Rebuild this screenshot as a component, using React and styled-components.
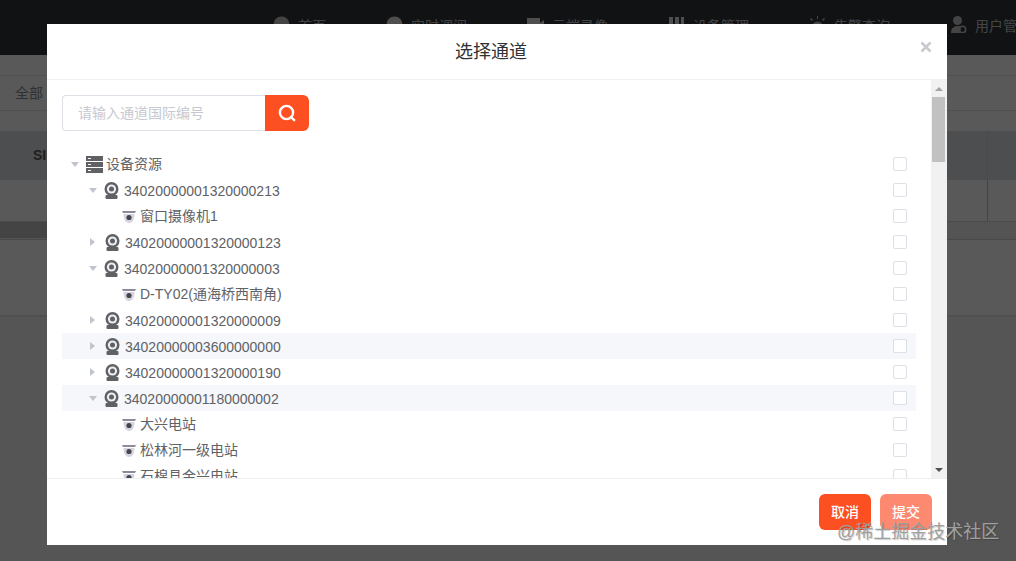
import React from "react";
import styled, { createGlobalStyle } from "styled-components";

const GlobalStyle = createGlobalStyle`
  html, body {
    margin: 0;
    padding: 0;
    background: #fff;
  }
  body {
    font-family: "Liberation Sans", "Noto Sans CJK SC", sans-serif;
    font-size: 14px;
  }
  * {
    box-sizing: border-box;
  }
`;

const Screen = styled.div`
  position: relative;
  width: 1016px;
  height: 561px;
  overflow: hidden;
`;

/* page behind the dialog */
const NavBar = styled.div`
  height: 55px;
  padding: 0 0 6px 273px;
  display: flex;
  align-items: center;
  gap: 60px;
  background: #2f343a;
  white-space: nowrap;
`;
const NavItem = styled.div`
  display: flex;
  align-items: center;
  gap: 8px;
  color: #c4c4c4;
  font-size: 14px;
  flex: none;
`;
const FilterRow = styled.div`
  height: 76px;
  padding-top: 20px;
`;
const FilterBox = styled.div`
  height: 36px;
  padding: 0 0 3px 15px;
  display: flex;
  align-items: center;
  border-top: 1px solid #e4e4e4;
  border-bottom: 1px solid #e4e4e4;
  color: #8c8c8c;
  font-size: 14px;
`;
const TableHead = styled.div`
  height: 49px;
  padding-left: 33px;
  display: flex;
  align-items: center;
  justify-content: space-between;
  background: #dcdfe2;
  color: #5a5c60;
  font-weight: 700;
  font-size: 14px;
`;
const HeadText = styled.span`
  padding-bottom: 4px;
`;
const TableRow = styled.div`
  height: 42px;
  display: flex;
  justify-content: flex-end;
  border-bottom: 1px solid #d8d8d8;
`;
const ColumnLine = styled.div`
  width: 29px;
  height: 100%;
  border-left: 1px solid #c4c4c4;
`;
const HeadLine = styled(ColumnLine)`
  border-left-color: #cfd2d5;
`;
const TableScroll = styled.div`
  height: 18px;
  background: #f0f0f0;
  border-bottom: 1px solid #d0d0d0;
`;
const ScrollThumb = styled.div`
  width: 60px;
  height: 16px;
  background: #c4c4c4;
`;
const EmptyArea = styled.div`
  height: 77px;
  border-bottom: 2px solid #e6e6e6;
`;
const PageEnd = styled.div`
  height: 250px;
  background: #f4f4f4;
`;

/* dialog */
const Overlay = styled.div`
  position: absolute;
  inset: 0;
  padding: 24px 0 0 47px;
  background: rgba(0, 0, 0, 0.65);
`;
const Dialog = styled.div`
  width: 900px;
  height: 521px;
  display: flex;
  flex-direction: column;
  background: #fff;
`;
const DialogHeader = styled.div`
  position: relative;
  height: 56px;
  flex: none;
  display: flex;
  align-items: center;
  justify-content: center;
  border-bottom: 1px solid #f0f0f0;
  padding: 1px 12px 0 0;
`;
const Title = styled.div`
  color: #303133;
  font-size: 18px;
  line-height: 24px;
`;
const CloseButton = styled.button`
  position: absolute;
  top: 17px;
  right: 15px;
  width: 12px;
  height: 12px;
  padding: 0;
  border: 0;
  display: flex;
  background: none;
  color: #c8cacf;
`;
const DialogBody = styled.div`
  flex: 1;
  min-height: 0;
  display: flex;
`;
const BodyContent = styled.div`
  flex: 1;
  min-width: 0;
  padding: 15px 15px 0;
  overflow: hidden;
`;
const SearchBar = styled.div`
  width: 247px;
  height: 36px;
  display: flex;
`;
const SearchInput = styled.input`
  flex: 1;
  min-width: 0;
  height: 36px;
  padding: 0 15px;
  border: 1px solid #dcdfe6;
  border-right: 0;
  border-radius: 4px 0 0 4px;
  outline: none;
  font: inherit;
  font-size: 14px;
  color: #606266;
  &::placeholder {
    color: #c6c9d0;
    opacity: 1;
  }
`;
const SearchButton = styled.button`
  width: 44px;
  height: 36px;
  flex: none;
  padding: 0;
  border: 0;
  border-radius: 0 6px 6px 0;
  display: flex;
  align-items: center;
  justify-content: center;
  background: #fc5022;
`;
const Tree = styled.div`
  margin-top: 20px;
`;
const Row = styled.div`
  height: 26px;
  display: flex;
  align-items: center;
  padding-left: ${(p) => p.$indent}px;
  padding-right: 9px;
  background: ${(p) => (p.$active ? "#f5f7fa" : "transparent")};
  color: #606266;
  font-size: 14px;
  white-space: nowrap;
`;
const Caret = styled.span`
  width: 0;
  height: 0;
  flex: none;
  border-style: solid;
  ${(p) =>
    p.$open
      ? `border-width: 5px 4px 0 4px;
         border-color: #c0c4cc transparent transparent transparent;
         margin: 1px 7px 0 0;`
      : `border-width: 4px 0 4px 5px;
         border-color: transparent transparent transparent #c0c4cc;
         margin: 0 10px 0 0;`}
`;
const RowIcon = styled.span`
  display: flex;
  flex: none;
  margin-right: ${(p) => p.$gap}px;
  margin-top: ${(p) => p.$drop || 0}px;
`;
const RowLabel = styled.span`
  padding-top: ${(p) => (p.$digits ? 2 : 0)}px;
  padding-bottom: ${(p) => (p.$digits ? 0 : 2)}px;
`;
const RowCheck = styled.span`
  width: 14px;
  height: 14px;
  flex: none;
  margin-left: auto;
  border: 1px solid #dcdfe6;
  border-radius: 2px;
  background: #fff;
`;
const ScrollTrack = styled.div`
  width: 16px;
  flex: none;
  display: flex;
  flex-direction: column;
  align-items: center;
  background: #f1f1f1;
`;
const ArrowCell = styled.div`
  height: 17px;
  flex: none;
  align-self: stretch;
  display: flex;
  align-items: center;
  justify-content: center;
`;
const UpArrow = styled.span`
  border-style: solid;
  border-width: 0 4px 4px 4px;
  border-color: transparent transparent #a3a3a3 transparent;
`;
const DownArrow = styled.span`
  border-style: solid;
  border-width: 4px 4px 0 4px;
  border-color: #505050 transparent transparent transparent;
`;
const Thumb = styled.div`
  width: 13px;
  height: 65px;
  flex: none;
  margin-right: 1px;
  background: #c1c1c1;
`;
const TrackSpace = styled.div`
  flex: 1;
`;
const DialogFooter = styled.div`
  height: 67px;
  flex: none;
  display: flex;
  justify-content: flex-end;
  gap: 9px;
  padding: 15px 15px 0 0;
  border-top: 1px solid #eee;
`;
const FooterButton = styled.button`
  width: 52px;
  height: 36px;
  padding: 0 0 2px;
  border: 0;
  border-radius: 6px;
  background: ${(p) => (p.$disabled ? "#fd8a70" : "#fc4f22")};
  color: #fff;
  font: inherit;
  font-size: 14px;
  font-weight: 500;
`;
const Watermark = styled.div`
  position: absolute;
  left: 837px;
  top: 520px;
  color: #a0a0a0;
  font-size: 18px;
  line-height: 24px;
  white-space: nowrap;
  text-shadow: 1px 1px 1px rgba(0, 0, 0, 0.2);
`;

const ServerIcon = () => (
  <svg width="17" height="17" viewBox="0 0 17 17">
    <path
      fill="#5f6165"
      fillRule="evenodd"
      d="M0 0h17v5H0zM2 2v1h3V2zM0 6h17v5H0zM2 8v1h3V8zM0 12h17v5H0zM2 14v1h3v-1z"
    />
  </svg>
);

const WebcamIcon = () => (
  <svg width="15" height="17" viewBox="0 0 15 17">
    <rect x="1.5" y="13" width="12" height="4" rx="1" fill="#5f6165" />
    <circle cx="7.5" cy="7" r="7" fill="#5f6165" />
    <circle cx="7.5" cy="7" r="4.6" fill="#eceef0" />
    <circle cx="7.5" cy="7" r="2.5" fill="#5f6165" />
  </svg>
);

const DomeIcon = () => (
  <svg width="14" height="12" viewBox="0 0 14 12">
    <path fill="#8d8a9c" d="M0 0h14l-1 2H1z" />
    <path fill="#d5d4df" d="M1.5 3h11c0 5-2 9-5.5 9S1.5 8 1.5 3z" />
    <circle cx="7" cy="6.500" r="2.600" fill="#45454f" />
  </svg>
);

const SearchIcon = () => (
  <svg width="18" height="18" viewBox="0 0 18 18" fill="none">
    <circle cx="8.500" cy="8.500" r="6.600" stroke="#fff" strokeWidth="2.400" />
    <path d="M13 13l3.200 3.200" stroke="#fff" strokeWidth="2.400" strokeLinecap="round" />
  </svg>
);

const CloseIcon = () => (
  <svg width="12" height="12" viewBox="0 0 12 12">
    <path d="M1.500 1.500l9 9M10.500 1.500l-9 9" stroke="currentColor" strokeWidth="2.600" />
  </svg>
);

const navIcons = {
  circle: <circle cx="8.500" cy="8.500" r="8" fill="#c4c4c4" />,
  play: <circle cx="8.500" cy="8.500" r="8" fill="#e0e0e0" />,
  video: <path fill="#e0e0e0" d="M0 2h13v5l4-3v10l-4-3v5H0z" />,
  grid: <path fill="#e0e0e0" d="M1 1h4v15H1zM7 1h4v15H7zM13 1h3v15h-3z" />,
  sun: (
    <g fill="#c4c4c4">
      <path d="M3 17v-6a5.500 5.500 0 0 1 11 0v6z" />
      <path d="M8 0h1v3H8zM1 3l1-1 2 2-1 1zM16 3l-1-1-2 2 1 1zM0 9h2.500v1H0zM14.500 9H17v1h-2.500z" />
    </g>
  ),
  user: (
    <g fill="#c4c4c4">
      <circle cx="7.500" cy="4.500" r="4.500" />
      <path d="M1 17c0-5 3-7 6.500-7 1.500 0 2.500.3 3.500 1l-1 6z" />
      <circle cx="12.500" cy="13.500" r="3.200" fill="none" stroke="#c4c4c4" strokeWidth="1.600" />
    </g>
  ),
};

const navItems = [
  { label: "首页", icon: "circle" },
  { label: "实时调阅", icon: "play" },
  { label: "云端录像", icon: "video" },
  { label: "设备管理", icon: "grid" },
  { label: "告警查询", icon: "sun" },
  { label: "用户管理", icon: "user" },
];

// kind: root | device | channel
const treeRows = [
  { kind: "root", label: "设备资源", open: true },
  { kind: "device", label: "34020000001320000213", open: true },
  { kind: "channel", label: "窗口摄像机1" },
  { kind: "device", label: "34020000001320000123" },
  { kind: "device", label: "34020000001320000003", open: true },
  { kind: "channel", label: "D-TY02(通海桥西南角)" },
  { kind: "device", label: "34020000001320000009" },
  { kind: "device", label: "34020000003600000000", active: true },
  { kind: "device", label: "34020000001320000190" },
  { kind: "device", label: "34020000001180000002", open: true, active: true },
  { kind: "channel", label: "大兴电站" },
  { kind: "channel", label: "松林河一级电站" },
  { kind: "channel", label: "石棉县金兴电站" },
];

const indentByKind = { root: 9, device: 27, channel: 60 };

const TreeRow = ({ row }) => (
  <Row $indent={row.kind === "channel" || row.open ? indentByKind[row.kind] : indentByKind[row.kind] + 1} $active={row.active}>
    {row.kind !== "channel" && <Caret $open={row.open} />}
    {row.kind === "root" && (
      <RowIcon $gap={3}>
        <ServerIcon />
      </RowIcon>
    )}
    {row.kind === "device" && (
      <RowIcon $gap={5}>
        <WebcamIcon />
      </RowIcon>
    )}
    {row.kind === "channel" && (
      <RowIcon $gap={4} $drop={1}>
        <DomeIcon />
      </RowIcon>
    )}
    <RowLabel $digits={row.kind === "device"}>{row.label}</RowLabel>
    <RowCheck />
  </Row>
);

const App = () => {
  return (
    <Screen>
      <GlobalStyle />
      <NavBar>
        {navItems.map((item) => (
          <NavItem key={item.label}>
            <svg width="17" height="17" viewBox="0 0 17 17">
              {navIcons[item.icon]}
            </svg>
            {item.label}
          </NavItem>
        ))}
      </NavBar>
      <FilterRow>
        <FilterBox>全部</FilterBox>
      </FilterRow>
      <TableHead>
        <HeadText>SIP用户名</HeadText>
        <HeadLine />
      </TableHead>
      <TableRow>
        <ColumnLine />
      </TableRow>
      <TableScroll>
        <ScrollThumb />
      </TableScroll>
      <EmptyArea />
      <PageEnd />

      <Overlay>
        <Dialog>
          <DialogHeader>
            <Title>选择通道</Title>
            <CloseButton>
              <CloseIcon />
            </CloseButton>
          </DialogHeader>
          <DialogBody>
            <BodyContent>
              <SearchBar>
                <SearchInput placeholder="请输入通道国际编号" />
                <SearchButton>
                  <SearchIcon />
                </SearchButton>
              </SearchBar>
              <Tree>
                {treeRows.map((row) => (
                  <TreeRow key={row.label} row={row} />
                ))}
              </Tree>
            </BodyContent>
            <ScrollTrack>
              <ArrowCell>
                <UpArrow />
              </ArrowCell>
              <Thumb />
              <TrackSpace />
              <ArrowCell>
                <DownArrow />
              </ArrowCell>
            </ScrollTrack>
          </DialogBody>
          <DialogFooter>
            <FooterButton>取消</FooterButton>
            <FooterButton $disabled>提交</FooterButton>
          </DialogFooter>
        </Dialog>
      </Overlay>
      <Watermark>@稀土掘金技术社区</Watermark>
    </Screen>
  );
};

export default App;
